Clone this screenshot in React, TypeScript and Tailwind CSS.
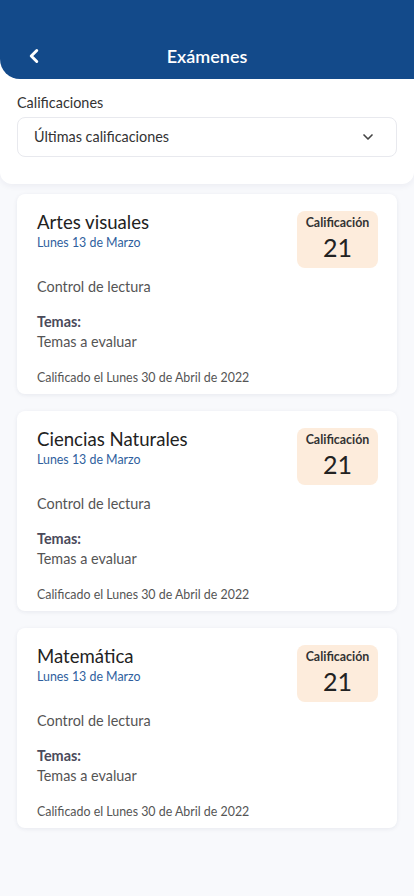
import { ChevronDown, ChevronLeft } from 'lucide-react';

const examenes = [
  { materia: 'Artes visuales', fecha: 'Lunes 13 de Marzo', nota: 21 },
  { materia: 'Ciencias Naturales', fecha: 'Lunes 13 de Marzo', nota: 21 },
  { materia: 'Matemática', fecha: 'Lunes 13 de Marzo', nota: 21 },
];

function ExamenCard({ materia, fecha, nota }: { materia: string; fecha: string; nota: number }) {
  return (
    <div className="bg-white rounded-lg shadow-[0_1px_4px_rgba(30,40,80,0.08)] pt-[17px] pb-[8px] pl-[20px] pr-[19px]">
      <div className="flex justify-between">
        <div>
          <div className="text-[18.6px] leading-[22px] text-[#222]">{materia}</div>
          <div className="text-[12.4px] leading-[16px] mt-[2px] text-[#2f5f9e]">{fecha}</div>
        </div>
        <div className="w-[81px] h-[57px] rounded-lg bg-[#fdecdc] flex flex-col items-center pt-[4px]">
          <div className="text-[12.4px] leading-[16px] font-bold text-[#333]">Calificación</div>
          <div className="text-[25px] leading-[28px] mt-[2px] text-[#222]">{nota}</div>
        </div>
      </div>
      <div className="text-[14.4px] leading-[20px] mt-[9px] text-[#555]">Control de lectura</div>
      <div className="text-[14.4px] leading-[20px] mt-[15px] font-bold text-[#4a4a5a]">Temas:</div>
      <div className="text-[14.4px] leading-[20px] text-[#555]">Temas a evaluar</div>
      <div className="text-[12.4px] leading-[16px] mt-[18px] text-[#555]">Calificado el Lunes 30 de Abril de 2022</div>
    </div>
  );
}

export default function App() {
  return (
    <div className="min-h-screen bg-[#f8f9fc] font-['Lato',sans-serif]">
      <div className="bg-white rounded-b-xl shadow-[0_2px_6px_rgba(30,40,80,0.06)]">
        <div className="bg-[#134a8a] rounded-bl-[20px] h-[79px] pt-[33px] px-[23px] flex items-center">
          <div className="h-[40px] w-full flex items-center justify-center relative">
            <ChevronLeft className="absolute left-0 text-white" size={22} strokeWidth={3.2} />
            <span className="text-white text-[18px] font-semibold">Exámenes</span>
          </div>
        </div>
        <div className="px-[17px] pt-[14px] pb-[27px]">
          <div className="text-[14.4px] leading-[20px] text-[#333]">Calificaciones</div>
          <div className="mt-[4px] h-[40px] border border-[#e8e9ee] rounded-lg flex items-center justify-between pl-[16px] pr-[20px]">
            <span className="text-[14.4px] text-[#333]">Últimas calificaciones</span>
            <ChevronDown className="text-[#444]" size={16} strokeWidth={2.5} />
          </div>
        </div>
      </div>
      <div className="px-[17px] pt-[10px] pb-[40px] flex flex-col gap-[17px]">
        {examenes.map((e) => (
          <ExamenCard key={e.materia} {...e} />
        ))}
      </div>
    </div>
  );
}
